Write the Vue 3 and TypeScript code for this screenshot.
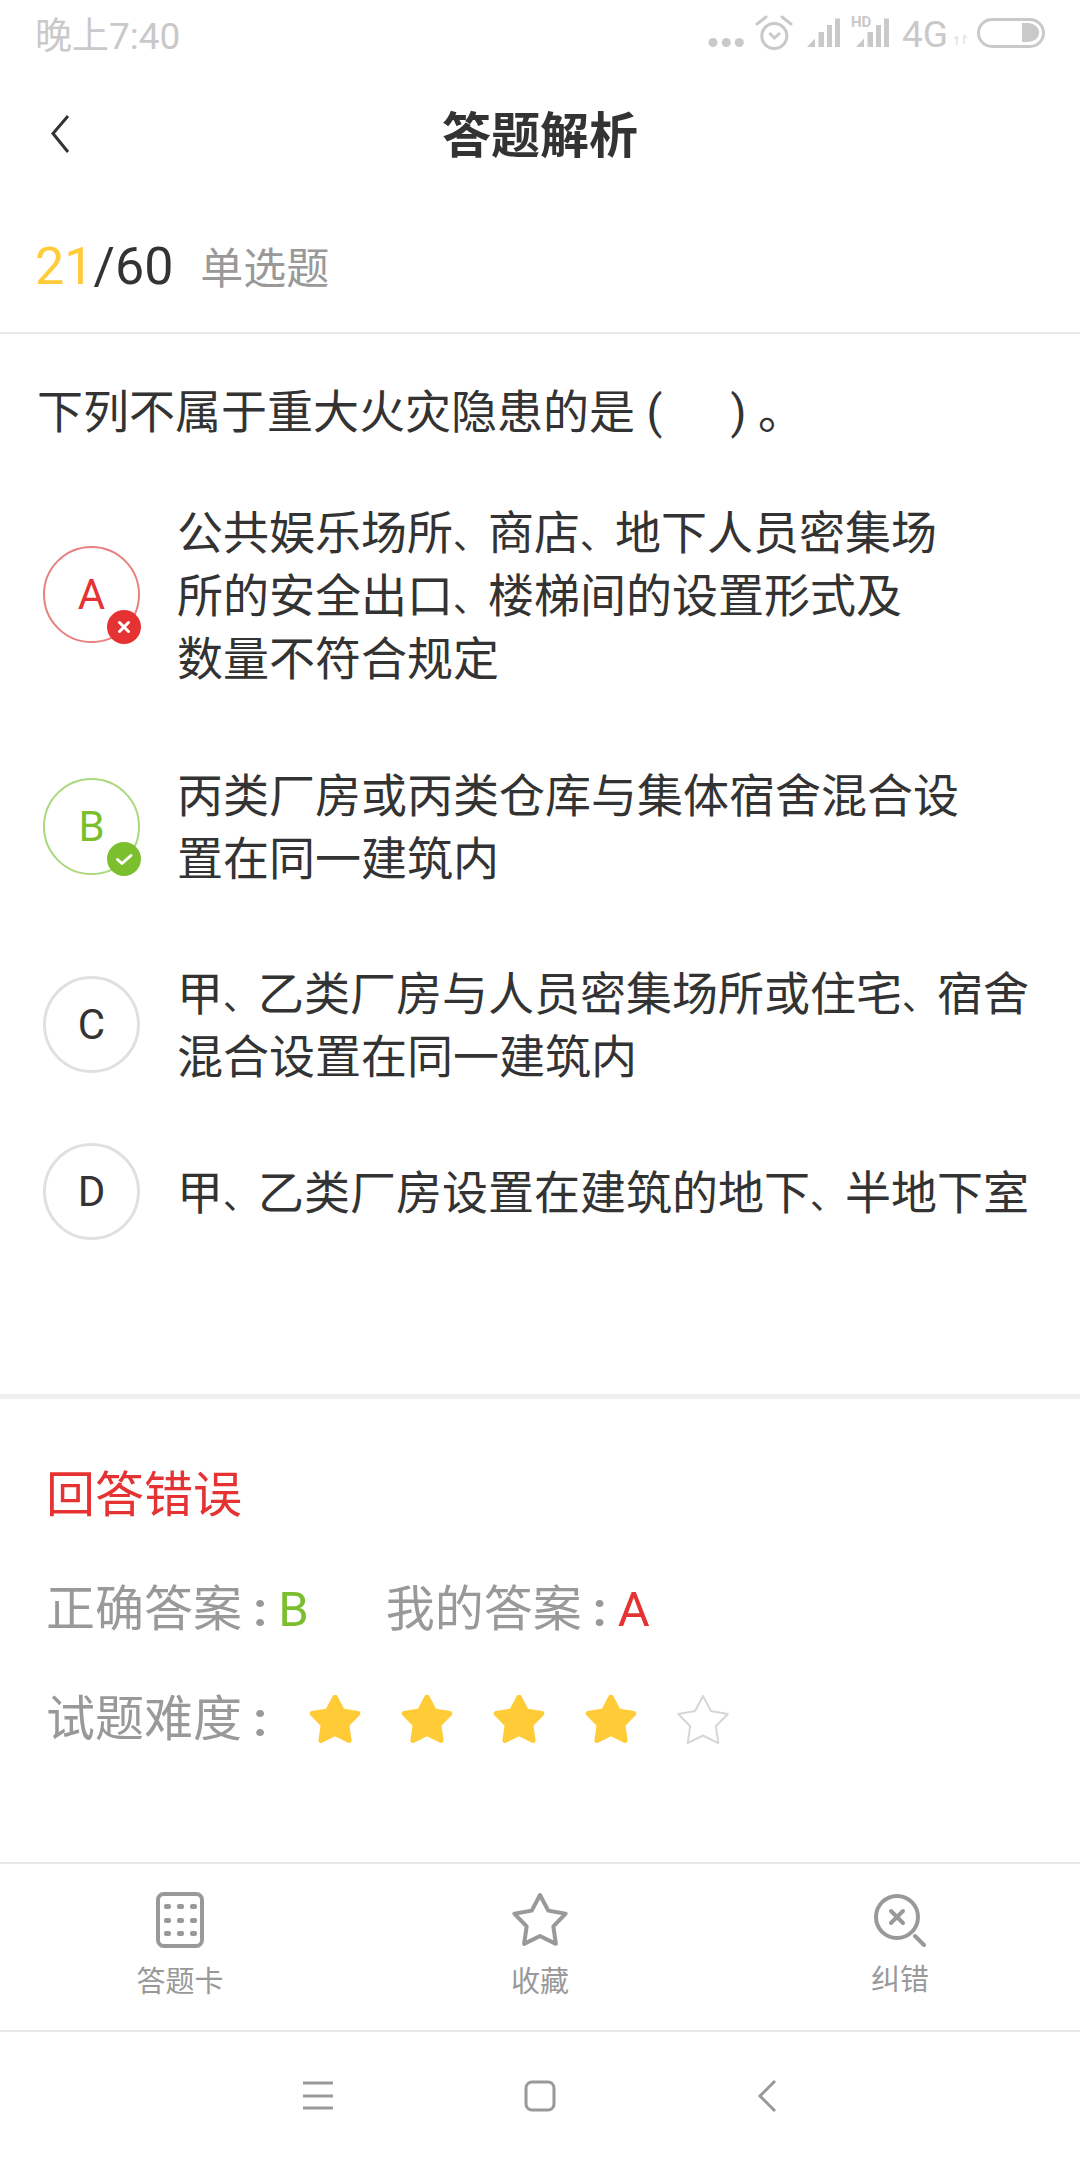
<script setup lang="ts">
type Option = { key: string; text: string[]; state: 'wrong' | 'right' | 'idle' }

const options: Option[] = [
  { key: 'A', text: ['公共娱乐场所、商店、地下人员密集场', '所的安全出口、楼梯间的设置形式及', '数量不符合规定'], state: 'wrong' },
  { key: 'B', text: ['丙类厂房或丙类仓库与集体宿舍混合设', '置在同一建筑内'], state: 'right' },
  { key: 'C', text: ['甲、乙类厂房与人员密集场所或住宅、宿舍', '混合设置在同一建筑内'], state: 'idle' },
  { key: 'D', text: ['甲、乙类厂房设置在建筑的地下、半地下室'], state: 'idle' },
]

// the 、 is narrower than a full cell in the original font
const segments = (line: string) => line.split(/(、)/).filter(Boolean)

const starPoints = (cx: number, cy: number, r: number) => {
  const pts: string[] = []
  for (let i = 0; i < 10; i++) {
    const radius = i % 2 === 0 ? r : r * 0.52
    const angle = -Math.PI / 2 + (i * Math.PI) / 5
    pts.push(`${(cx + radius * Math.cos(angle)).toFixed(2)},${(cy + radius * Math.sin(angle)).toFixed(2)}`)
  }
  return pts.join(' ')
}

const difficulty = [true, true, true, true, false]
const dotRows = [14, 28, 41]
const dotCols = [14, 27, 40]
</script>

<template>
  <div class="page">
    <div class="status">
      <span class="time">晚上7:40</span>
      <svg class="status-icons" width="400" height="70" viewBox="0 0 400 70">
        <g fill="#c9c9c9">
          <circle cx="33" cy="42.5" r="4.5" />
          <circle cx="46.3" cy="42.5" r="4.5" />
          <circle cx="59.3" cy="42.5" r="4.5" />
          <path d="M127 47l8-8.500V47zM138.500 32h5.500v15h-5.500zM147 25h5v22h-5zM155 18.500h5V47h-5z" />
          <path d="M176 47l8-8.500V47zM187.500 32h5.500v15h-5.500zM196 25h5v22h-5zM204 18.500h5V47h-5z" />
          <path d="M342 23h6a11 9.500 0 0 1 11 9.500a11 9.500 0 0 1-11 9.500h-6z" />
          <text x="171" y="27" font-size="15" font-weight="700" font-family="Roboto, sans-serif">HD</text>
          <text x="222" y="47" font-size="37" font-family="Roboto, sans-serif">4G</text>
        </g>
        <g fill="none" stroke="#c9c9c9" stroke-width="3">
          <circle cx="94.300" cy="36" r="12.500" />
          <path d="M77 24l9-7M102 17l9 7" stroke-linecap="round" />
          <path d="M89.500 33l5 5 5.500-5" />
          <rect x="298.500" y="19.500" width="65" height="27" rx="13.500" />
        </g>
        <path d="M277 45v-9M274.500 39l2.500-3M284 35v9M284 35l2.500 3" fill="none" stroke="#e2e2e2" stroke-width="1.500" />
      </svg>
    </div>

    <header class="nav">
      <svg class="nav-back" width="24" height="40" viewBox="0 0 24 40">
        <path d="M20 2L5 19.500 20 38" fill="none" stroke="#333" stroke-width="3" />
      </svg>
      <h1 class="nav-title">答题解析</h1>
    </header>

    <div class="meta">
      <span class="count"><em>21</em>/60</span>
      <span class="kind">单选题</span>
    </div>

    <section class="question">
      <p class="stem">下列不属于重大火灾隐患的是 (&nbsp;&nbsp;&nbsp;&nbsp;&nbsp;&nbsp;) 。</p>
      <div class="options">
        <div v-for="opt in options" :key="opt.key" class="option">
          <div class="circle" :class="opt.state">
            {{ opt.key }}
            <svg v-if="opt.state === 'wrong'" class="badge" viewBox="0 0 34 34">
              <circle cx="17" cy="17" r="17" fill="#e53333" />
              <path d="M12.500 12.500l9 9M21.500 12.500l-9 9" stroke="#fff" stroke-width="3" stroke-linecap="round" />
            </svg>
            <svg v-if="opt.state === 'right'" class="badge" viewBox="0 0 34 34">
              <circle cx="17" cy="17" r="17" fill="#7cbf2e" />
              <path d="M10.500 17.500l4.500 4 9-8" fill="none" stroke="#fff" stroke-width="3" stroke-linecap="round" stroke-linejoin="round" />
            </svg>
          </div>
          <div class="option-text">
            <div v-for="line in opt.text" :key="line">
              <template v-for="(seg, i) in segments(line)" :key="i">
                <span v-if="seg === '、'" class="dun">、</span>
                <template v-else>{{ seg }}</template>
              </template>
            </div>
          </div>
        </div>
      </div>
    </section>

    <section class="result">
      <div class="verdict">回答错误</div>
      <div class="answers">
        <span class="answer">正确答案 <i>:</i> <b class="green">B</b></span>
        <span class="answer">我的答案 <i>:</i> <b class="red">A</b></span>
      </div>
      <div class="level">
        <span class="answer">试题难度 <i>:</i></span>
        <div class="stars">
          <svg v-for="(on, i) in difficulty" :key="i" width="52" height="50" viewBox="0 0 52 50">
            <polygon v-if="on" :points="starPoints(26, 26, 24)" fill="#ffcb37" stroke="#ffcb37" stroke-width="5" stroke-linejoin="round" />
            <polygon v-else :points="starPoints(26, 27, 26)" fill="none" stroke="#d6d6d6" stroke-width="2" stroke-linejoin="round" />
          </svg>
        </div>
      </div>
    </section>

    <footer class="tabs">
      <div class="tab">
        <svg width="56" height="56" viewBox="0 0 56 56">
          <rect x="6" y="2" width="44" height="52" rx="6" fill="none" stroke="#999" stroke-width="4" />
          <g fill="#999">
            <template v-for="y in dotRows" :key="y">
              <rect v-for="x in dotCols" :key="x" :x="x - 2" :y="y - 2" width="7" height="5" rx="2" />
            </template>
          </g>
        </svg>
        <span>答题卡</span>
      </div>
      <div class="tab">
        <svg width="60" height="56" viewBox="0 0 60 56">
          <polygon :points="starPoints(30, 30, 27)" fill="none" stroke="#999" stroke-width="4" stroke-linejoin="round" />
        </svg>
        <span>收藏</span>
      </div>
      <div class="tab tab-short">
        <svg width="56" height="56" viewBox="0 0 56 56">
          <circle cx="25" cy="25" r="21" fill="none" stroke="#999" stroke-width="4" />
          <path d="M19 19l12 12M31 19L19 31" stroke="#999" stroke-width="4" stroke-linecap="round" />
          <path d="M43 44l9 9" stroke="#999" stroke-width="4" stroke-linecap="round" />
        </svg>
        <span>纠错</span>
      </div>
    </footer>

    <div class="sysbar">
      <svg width="30" height="30" viewBox="0 0 30 30">
        <path d="M0 2h30M0 15h30M0 27h30" stroke="#999" stroke-width="3" />
      </svg>
      <svg width="32" height="32" viewBox="0 0 32 32">
        <rect x="2" y="2" width="28" height="28" rx="6" fill="none" stroke="#999" stroke-width="3" />
      </svg>
      <svg width="20" height="32" viewBox="0 0 20 32">
        <path d="M18 1L3 16l15 15" fill="none" stroke="#999" stroke-width="3" />
      </svg>
    </div>
  </div>
</template>

<style>
html,
body {
  margin: 0;
  background: #fff;
}
</style>

<style scoped>
.page {
  width: 1080px;
  height: 2160px;
  display: flex;
  flex-direction: column;
  font-family: Roboto, "Noto Sans CJK SC", sans-serif;
  color: #333;
  background: #fff;
  overflow: hidden;
}

.status {
  height: 70px;
  display: flex;
  justify-content: space-between;
  align-items: center;
  padding-left: 35px;
}
.time {
  font-size: 37px;
  color: #c9c9c9;
  padding-bottom: 4px;
}

.nav {
  height: 130px;
  position: relative;
  display: flex;
  align-items: center;
  justify-content: center;
}
.nav-back {
  position: absolute;
  left: 48px;
  top: 44px;
}
.nav-title {
  margin: 0 0 8px;
  font-size: 49px;
  font-weight: 700;
}

.meta {
  height: 132px;
  border-bottom: 2px solid #e8e8e8;
  display: flex;
  align-items: center;
  gap: 27px;
  padding-left: 35px;
}
.count {
  font-size: 52px;
}
.count em {
  font-style: normal;
  color: #ffcb37;
}
.kind {
  font-size: 43px;
  color: #999;
  padding-bottom: 2px;
}

.question {
  padding: 47px 0 154px;
  border-bottom: 5px solid #eee;
}
.stem {
  margin: 0 0 54px 37px;
  font-size: 46px;
  line-height: 63px;
}
.options {
  display: flex;
  flex-direction: column;
}
.option {
  display: flex;
  align-items: center;
  padding-left: 43px;
}
.option:nth-child(1) {
  margin-bottom: 70px;
}
.option:nth-child(2) {
  margin-bottom: 68px;
}
.option:nth-child(3) {
  margin-bottom: 54px;
}
.circle {
  position: relative;
  flex: none;
  width: 97px;
  height: 97px;
  box-sizing: border-box;
  border: 3px solid #e0e0e0;
  border-radius: 50%;
  display: flex;
  align-items: center;
  justify-content: center;
  font-size: 42px;
  color: #333;
}
.circle.wrong {
  border: 2px solid #e98080;
  color: #e53333;
}
.circle.right {
  border: 2px solid #a9d87d;
  color: #7cbf2e;
}
.badge {
  position: absolute;
  right: -3px;
  bottom: -3px;
  width: 34px;
  height: 34px;
}
.option-text {
  margin-left: 37px;
  padding-top: 4px;
  font-size: 46px;
  line-height: 63px;
  white-space: nowrap;
}
.dun {
  font-size: 35px;
  line-height: 1;
}

.result {
  padding: 64px 46px 0;
  font-size: 49px;
  line-height: 66px;
  color: #999;
}
.verdict {
  color: #e53333;
  margin-bottom: 48px;
}
.answers {
  display: flex;
  gap: 77px;
  margin-bottom: 44px;
}
.answer {
  word-spacing: -1px;
}
.answer b {
  font-weight: 400;
}
.answer i {
  font-style: normal;
  font-weight: 700;
}
.green {
  color: #7cbf2e;
}
.red {
  color: #e53333;
}
.level {
  display: flex;
  align-items: center;
}
.stars {
  display: flex;
  gap: 40px;
  margin-left: 42px;
}

.tabs {
  margin-top: auto;
  height: 166px;
  border-top: 2px solid #e8e8e8;
  border-bottom: 2px solid #e8e8e8;
  display: grid;
  grid-template-columns: repeat(3, 1fr);
}
.tab {
  display: flex;
  flex-direction: column;
  align-items: center;
  padding-top: 28px;
  gap: 14px;
  font-size: 29px;
  line-height: 40px;
  color: #999;
}
.tab-short {
  gap: 12px;
}

.sysbar {
  height: 128px;
  display: flex;
  align-items: center;
  gap: 191px;
  padding-left: 303px;
}
.sysbar svg:last-child {
  margin-left: 10px;
}
</style>
